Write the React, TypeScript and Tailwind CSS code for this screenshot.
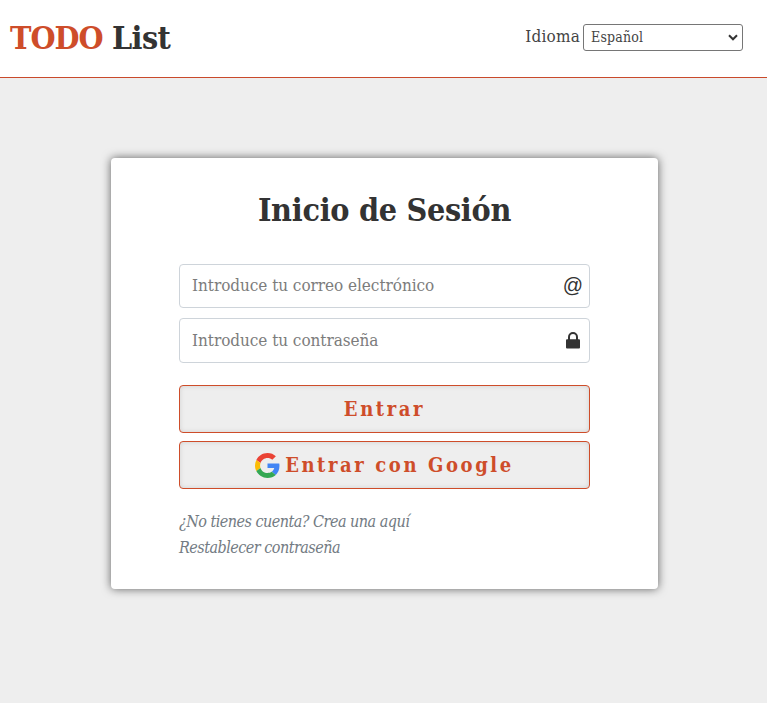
const serif = "font-['DejaVu_Serif_Condensed','DejaVu_Serif',serif] [font-stretch:condensed]";

function GoogleLogo() {
  return (
    <svg viewBox="0 0 48 48" className="h-[25px] w-[25px] shrink-0">
      <path fill="#EA4335" d="M24 9.5c3.54 0 6.71 1.22 9.21 3.6l6.85-6.85C35.9 2.38 30.47 0 24 0 14.62 0 6.51 5.38 2.56 13.22l7.98 6.19C12.43 13.72 17.74 9.5 24 9.5z" />
      <path fill="#4285F4" d="M46.98 24.55c0-1.57-.15-3.09-.38-4.55H24v9.02h12.94c-.58 2.96-2.26 5.48-4.78 7.18l7.73 6c4.51-4.18 7.09-10.36 7.09-17.65z" />
      <path fill="#FBBC05" d="M10.53 28.59c-.48-1.45-.76-2.99-.76-4.59s.27-3.14.76-4.59l-7.98-6.19C.92 16.46 0 20.12 0 24c0 3.88.92 7.54 2.56 10.78l7.97-6.19z" />
      <path fill="#34A853" d="M24 48c6.48 0 11.93-2.13 15.89-5.81l-7.73-6c-2.15 1.45-4.92 2.3-8.16 2.3-6.26 0-11.57-4.22-13.47-9.91l-7.98 6.19C6.51 42.62 14.62 48 24 48z" />
    </svg>
  );
}

function LockIcon() {
  return (
    <svg viewBox="0 0 14 17" className="h-[17px] w-[14px]">
      <path d="M3 8V5a4 4 0 0 1 8 0v3" fill="none" stroke="#333" strokeWidth="2" />
      <rect x="0" y="7.3" width="14" height="9.2" rx="1" fill="#333" />
    </svg>
  );
}

export default function App() {
  return (
    <div className={`flex h-[703px] w-full flex-col overflow-hidden bg-[#eee] text-[#333] ${serif}`}>
      <header className="flex h-[78px] shrink-0 items-start justify-between border-b border-[#c94a2b] bg-white pr-6 pl-[10px]">
        <h1 className="mt-[18px] text-[32px] leading-10 font-bold tracking-[-0.6px] whitespace-nowrap">
          <span className="tracking-[-1px] text-[#ce4d2a]">TODO</span> List
        </h1>
        <div className="mt-6 flex items-center">
          <span className="mr-[3px] mb-[3px] text-[17px] leading-6 tracking-[0.2px] text-[#444]">Idioma</span>
          <div className="flex h-[27px] w-[160px] items-center justify-between rounded-[3px] border border-[#767676] bg-white pr-1 pl-[7px]">
            <span className="mb-0.5 text-[14px] leading-5 tracking-[0.2px] text-[#444]">Español</span>
            <svg viewBox="0 0 10 7" className="h-[7px] w-[10px]">
              <path d="M1 1.3l4 4 4-4" fill="none" stroke="#333" strokeWidth="2" />
            </svg>
          </div>
        </div>
      </header>

      <main className="mt-20 ml-[111px] flex h-[431px] w-[547px] shrink-0 flex-col rounded-[4px] bg-white px-[68px] shadow-[0_0_10px_rgba(0,0,0,0.6)]">
        <h2 className="mt-8 text-center text-[32px] leading-10 font-bold tracking-[-0.3px] whitespace-nowrap">Inicio de Sesión</h2>

        <div className="mt-[34px] flex h-11 items-center justify-between rounded-[4px] border border-[#ced4da] pr-[6px] pl-3">
          <span className="text-[17px] tracking-[-0.05px] text-[#7c7c7c]">Introduce tu correo electrónico</span>
          <span className="mb-0.5 font-['Liberation_Sans',sans-serif] text-[20px] leading-6">@</span>
        </div>
        <div className="mt-[10px] flex h-[45px] items-center justify-between rounded-[4px] border border-[#ced4da] pr-[9px] pl-3">
          <span className="text-[17px] tracking-[-0.05px] text-[#7c7c7c]">Introduce tu contraseña</span>
          <LockIcon />
        </div>

        <button className="mt-[22px] flex h-12 items-center justify-center rounded-[4px] border border-[#ce4d2a] bg-[#eee] text-[20px] font-bold tracking-[2.6px] text-[#ce4d2a] shadow-[inset_0_0_5px_rgba(0,0,0,0.12)]">
          Entrar
        </button>
        <button className="mt-2 flex h-12 items-center justify-center gap-[5px] rounded-[4px] border border-[#ce4d2a] bg-[#eee] text-[20px] font-bold tracking-[2.6px] text-[#ce4d2a] shadow-[inset_0_0_5px_rgba(0,0,0,0.12)]">
          <GoogleLogo />
          <span>Entrar con Google</span>
        </button>

        <div className="mt-5 flex flex-col text-[16px] leading-[26px] tracking-[-0.52px] text-[#737b83] italic">
          <a>¿No tienes cuenta? Crea una aquí</a>
          <a>Restablecer contraseña</a>
        </div>
      </main>
    </div>
  );
}
